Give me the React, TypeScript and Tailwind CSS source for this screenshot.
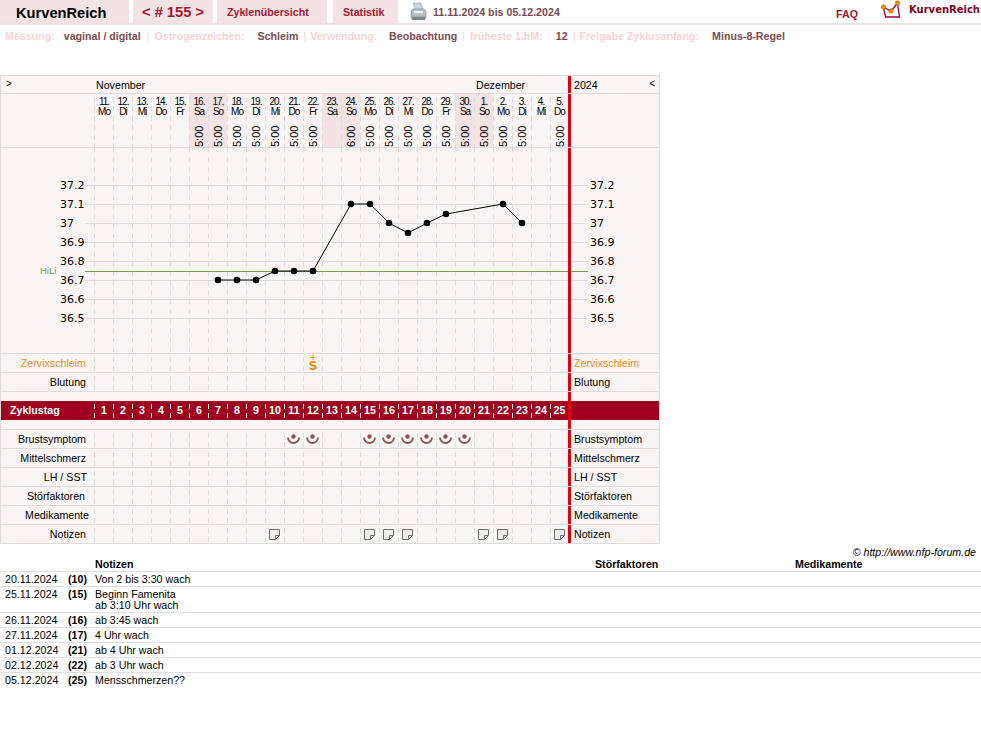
import React from "react";

const days = [
  ["11.", "Mo", ""], ["12.", "Di", ""], ["13.", "Mi", ""], ["14.", "Do", ""], ["15.", "Fr", ""],
  ["16.", "Sa", "5:00"], ["17.", "So", "5:00"], ["18.", "Mo", "5:00"], ["19.", "Di", "5:00"], ["20.", "Mi", "5:00"],
  ["21.", "Do", "5:00"], ["22.", "Fr", "5:00"], ["23.", "Sa", ""], ["24.", "So", "6:00"], ["25.", "Mo", "5:00"],
  ["26.", "Di", "5:00"], ["27.", "Mi", "5:00"], ["28.", "Do", "5:00"], ["29.", "Fr", "5:00"], ["30.", "Sa", "5:00"],
  ["1.", "So", "5:00"], ["2.", "Mo", "5:00"], ["3.", "Di", "5:00"], ["4.", "Mi", ""], ["5.", "Do", "5:00"],
];

const cycleDays = Array.from({ length: 25 }, (_, i) => i + 1);
const dash =
  "bg-[linear-gradient(transparent_0_3px,#dedad9_3px_8px,transparent_8px_12px,#dedad9_12px_17px,transparent_17px_19px)] bg-[length:1px_19px] bg-repeat-y";
const whiteDash =
  "bg-[linear-gradient(transparent_0_3px,#f8e8ea_3px_8px,transparent_8px_12px,#f8e8ea_12px_17px,transparent_17px_19px)] bg-[length:1px_19px] bg-repeat-y";

const temps = [
  [37.2, 185], [37.1, 204], [37, 223], [36.9, 242], [36.8, 261], [36.7, 280], [36.6, 299], [36.5, 318],
];
const curve = [
  [218, 280], [237, 280], [256, 280], [275, 271], [294, 271], [313, 271], [351, 204],
  [370, 204], [389, 223], [408, 233], [427, 223], [446, 214], [503, 204], [522, 223],
];

const notes = [
  ["20.11.2024", "(10)", ["Von 2 bis 3:30 wach"]],
  ["25.11.2024", "(15)", ["Beginn Famenita", "ab 3:10 Uhr wach"]],
  ["26.11.2024", "(16)", ["ab 3:45 wach"]],
  ["27.11.2024", "(17)", ["4 Uhr wach"]],
  ["01.12.2024", "(21)", ["ab 4 Uhr wach"]],
  ["02.12.2024", "(22)", ["ab 3 Uhr wach"]],
  ["05.12.2024", "(25)", ["Mensschmerzen??"]],
] as const;

const SmileIcon = () => (
  <svg width="13" height="12" viewBox="0 0 13 12">
    <circle cx="6.500" cy="3.500" r="2.200" fill="#8a5558" />
    <path d="M1 4.500a5.500 5.500 0 0 0 11 0" fill="none" stroke="#8a5558" strokeWidth="1.800" />
  </svg>
);

const NoteIcon = () => (
  <svg width="11" height="11" viewBox="0 0 11 11">
    <path d="M.5.5h10v6l-4 4h-6z" fill="#efecea" stroke="#6f6f6f" />
    <path d="M6.5 10.5v-4h4z" fill="#d8d8d8" stroke="#6f6f6f" />
  </svg>
);

const PrinterIcon = () => (
  <svg width="17" height="20" viewBox="0 0 17 20">
    <path d="M3 1h8l2 7H5z" fill="#c9d6e2" stroke="#8fa0b0" strokeWidth=".6" />
    <path d="M1 9l2-2h11l2 2v6H1z" fill="#b9bec2" stroke="#7d8388" strokeWidth=".6" />
    <path d="M1 15h15l-1 3H2z" fill="#7f868b" />
    <rect x="4" y="9" width="9" height="2" fill="#eef0f1" />
  </svg>
);

const LogoIcon = () => (
  <svg width="21" height="19" viewBox="0 0 21 19">
    <path d="M2.500 7l2 10h14L16.500 3" fill="none" stroke="#a00040" strokeWidth="1.300" />
    <path d="M2.500 7l7.500 4.500 6.500-8.500" fill="none" stroke="#a00040" strokeWidth="1.300" />
    <circle cx="2.500" cy="7" r="2.300" fill="#f09000" stroke="#a85a10" strokeWidth=".5" />
    <circle cx="10" cy="11" r="2.300" fill="#f09000" stroke="#a85a10" strokeWidth=".5" />
    <circle cx="16.500" cy="3" r="2.300" fill="#f09000" stroke="#a85a10" strokeWidth=".5" />
  </svg>
);

const Row = ({
  label,
  labelClass = "",
  rightClass = "",
  marks = {},
}: {
  label: string;
  labelClass?: string;
  rightClass?: string;
  marks?: Record<number, React.ReactNode>;
}) => (
  <div className="flex h-[19px] border-b border-[#dedcdb]">
    <div className={`w-[93px] pr-2 text-right leading-[18px] ${labelClass}`}>{label}</div>
    {cycleDays.map((d) => (
      <div
        key={d}
        className={`flex items-center justify-center ${dash} ${d === 25 ? "w-[18px]" : "w-[19px]"}`}
      >
        {marks[d]}
      </div>
    ))}
    <div className="w-[3px] bg-[#e00010]" />
    <div className={`flex-1 pl-[3px] leading-[18px] ${rightClass}`}>{label}</div>
  </div>
);

const marksFor = (list: number[], node: React.ReactNode) =>
  Object.fromEntries(list.map((d) => [d, node]));

const Label = ({ children }: { children: React.ReactNode }) => (
  <span className="text-[#f8d2d5]">{children}</span>
);
const Value = ({ gap, children }: { gap: string; children: React.ReactNode }) => (
  <span className={`${gap} text-[#7a4a50]`}>{children}</span>
);
const Pipe = ({ gap }: { gap: string }) => <span className={`${gap} font-normal text-[#f8d2d5]`}>|</span>;

export default function App() {
  return (
    <div className="min-h-[737px] bg-white font-['Liberation_Sans',Arial,sans-serif] text-[10.67px] text-black">
      {/* top tabs */}
      <div className="flex h-[25px] border-b-2 border-[#f3dfe1] font-bold">
        <div className="h-[23px] w-[129px] bg-[#f3e3e5] pl-[16px] text-[14.67px] leading-[26px]">KurvenReich</div>
        <div className="ml-[4px] h-[23px] w-[80px] bg-[#f3e3e5] text-center text-[14.67px] leading-[25px] text-[#a81830]">
          &lt; # 155 &gt;
        </div>
        <div className="ml-[4px] h-[23px] w-[110px] bg-[#f3e3e5] pl-[10px] leading-[24px] text-[#a81830]">Zyklenübersicht</div>
        <div className="ml-[6px] h-[23px] w-[65px] bg-[#f3e3e5] pl-[10px] leading-[24px] text-[#a81830]">Statistik</div>
        <div className="ml-[12px] pt-[2px]">
          <PrinterIcon />
        </div>
        <div className="ml-[6px] leading-[24px] text-[#7a4a50]">11.11.2024 bis 05.12.2024</div>
        <div className="ml-auto flex">
          <div className="mr-[23px] pt-[8px] leading-[13px] text-[#a01830]">FAQ</div>
          <div className="mr-[7px]">
            <LogoIcon />
          </div>
          <div className="pr-[1px] pt-[4px] font-['DejaVu_Sans',sans-serif] text-[10px] leading-[12px] text-[#8a0020]">
            KurvenReich
          </div>
        </div>
      </div>

      {/* settings line */}
      <div className="h-[50px] pl-[5px] pt-[5px] font-bold leading-[12px]">
        <Label>Messung:</Label>
        <Value gap="ml-[9px]">vaginal / digital</Value>
        <Pipe gap="ml-[6px] mr-[5px]" />
        <Label>Östrogenzeichen:</Label>
        <Value gap="ml-[13px]">Schleim</Value>
        <Pipe gap="ml-[5px] mr-[4px]" />
        <Label>Verwendung:</Label>
        <Value gap="ml-[12px]">Beobachtung</Value>
        <Pipe gap="ml-[5px] mr-[5px]" />
        <Label>früheste 1.hM:</Label>
        <Value gap="ml-[13px]">12</Value>
        <Pipe gap="ml-[5px] mr-[4px]" />
        <Label>Freigabe Zyklusanfang:</Label>
        <Value gap="ml-[13px]">Minus-8-Regel</Value>
      </div>

      {/* cycle table */}
      <div className="w-[660px] border-x border-t border-[#dedcdb] bg-[#f9f5f5]">
        <div className="flex h-[18px] border-b border-[#dedcdb] leading-[19px]">
          <div className="w-[93px] pl-[5px] text-[10px] leading-[16px]">&gt;</div>
          <div className="w-[382px] pl-[2px]">November</div>
          <div className="w-[92px]">Dezember</div>
          <div className="w-[3px] bg-[#e00010]" />
          <div className="flex flex-1 justify-between pl-[3px] pr-[4px]">
            <span>2024</span>
            <span className="text-[10px] leading-[16px]">&lt;</span>
          </div>
        </div>

        <div className="flex h-[54px] border-b border-[#dedcdb]">
          <div className="w-[93px]" />
          {days.map(([date, day, time], i) => (
            <div
              key={date + day}
              className={`${i === 24 ? "w-[18px]" : "w-[19px]"} ${
                day === "Sa" || day === "So" ? "bg-[#f3e3e5]" : ""
              } flex flex-col items-center text-[10px] leading-[10px] tracking-[-1px]`}
            >
              <div className={`h-[53px] w-full ${dash} pl-[1px] text-center`}>
                <div className="pt-[3px]">{date}</div>
                <div>{day}</div>
                <div className="mt-[8px] flex h-[22px] justify-center">
                  <span className="rotate-180 text-[11px] leading-[12px] tracking-normal [writing-mode:vertical-rl]">
                    {time}
                  </span>
                </div>
              </div>
            </div>
          ))}
          <div className="w-[3px] bg-[#e00010]" />
          <div className="flex-1" />
        </div>

        {/* temperature chart */}
        <div className="h-[206px] border-b border-[#dedcdb]">
          <svg width="658" height="205" viewBox="1 148 658 205" className="block">
            {temps.map(([t, y]) => (
              <g key={t}>
                <line x1="85" x2="588" y1={y + 0.5} y2={y + 0.5} stroke="#dedad9" />
                <text x="60" y={y + 4} fontFamily="DejaVu Sans" fontSize="11" fill="#000">{t}</text>
                <text x="590" y={y + 4} fontFamily="DejaVu Sans" fontSize="11" fill="#000">{t}</text>
              </g>
            ))}
            {cycleDays.map((d) => (
              <line
                key={d}
                x1={75.5 + d * 19}
                x2={75.5 + d * 19}
                y1="148"
                y2="353"
                stroke="#dedad9"
                strokeDasharray="4.5 5"
              />
            ))}
            <text x="40" y="274" fontFamily="Liberation Sans" fontSize="9.5" fill="#7da050">HiLi</text>
            <line x1="85" x2="588" y1="271.5" y2="271.5" stroke="#70994f" />
            <polyline
              points={curve.map(([x, y]) => `${x},${y}`).join(" ")}
              fill="none"
              stroke="#000"
              strokeWidth="1"
            />
            {curve.map(([x, y]) => (
              <circle key={x} cx={x} cy={y} r="3.3" fill="#000" />
            ))}
            <rect x="568" y="148" width="3" height="205" fill="#e00010" />
          </svg>
        </div>

        <Row
          label="Zervixschleim"
          labelClass="text-[#f58a1f]"
          rightClass="text-[#f58a1f]"
          marks={{
            12: (
              <span className="flex flex-col items-center pl-[1px] font-['DejaVu_Sans',sans-serif] font-bold text-[#f58a00]">
                <span className="h-[5px] text-[8px] leading-[5px]">+</span>
                <span className="mt-[1px] h-[11px] text-[12px] leading-[11px]">S</span>
              </span>
            ),
          }}
        />
        <Row label="Blutung" />

        <div className="flex h-[9px]">
          <div className="w-[567px]" />
          <div className="w-[3px] bg-[#e00010]" />
        </div>
        <div className="flex h-[19px] bg-[#a00020] font-bold leading-[19px] text-white">
          <div className="w-[93px] pl-[9px]">Zyklustag</div>
          {cycleDays.map((d) => (
            <div key={d} className={`${d === 25 ? "w-[18px]" : "w-[19px]"} ${whiteDash} pl-[1px] text-center`}>
              {d}
            </div>
          ))}
          <div className="w-[3px] bg-[#e00010]" />
        </div>
        <div className="flex h-[10px] border-b border-[#dedcdb]">
          <div className="w-[567px]" />
          <div className="w-[3px] bg-[#e00010]" />
        </div>

        <Row label="Brustsymptom" marks={marksFor([11, 12, 15, 16, 17, 18, 19, 20], <SmileIcon />)} />
        <Row label="Mittelschmerz" />
        <Row label="LH / SST" labelClass="pr-[7px]" />
        <Row label="Störfaktoren" labelClass="pr-[9px]" />
        <Row label="Medikamente" labelClass="pr-[5px]" />
        <Row label="Notizen" marks={marksFor([10, 15, 16, 17, 21, 22, 25], <NoteIcon />)} />
      </div>

      {/* notes */}
      <div className="h-[14px] pr-[5px] pt-[2px] text-right italic leading-[12px]">© http://www.nfp-forum.de</div>
      <div className="grid h-[14px] grid-cols-[95px_500px_200px_1fr] border-b border-[#dedede] font-bold leading-[13px]">
        <div />
        <div>Notizen</div>
        <div>Störfaktoren</div>
        <div>Medikamente</div>
      </div>
      {notes.map(([date, day, lines], i) => (
        <div
          key={date}
          className={`grid grid-cols-[68px_27px_1fr] pb-[1px] pt-[2px] leading-[11px] ${
            i < notes.length - 1 ? "border-b border-[#dedede]" : ""
          }`}
        >
          <div className="pl-[5px]">{date}</div>
          <div className="font-bold">{day}</div>
          <div>
            {lines.map((line) => (
              <div key={line}>{line}</div>
            ))}
          </div>
        </div>
      ))}
    </div>
  );
}
